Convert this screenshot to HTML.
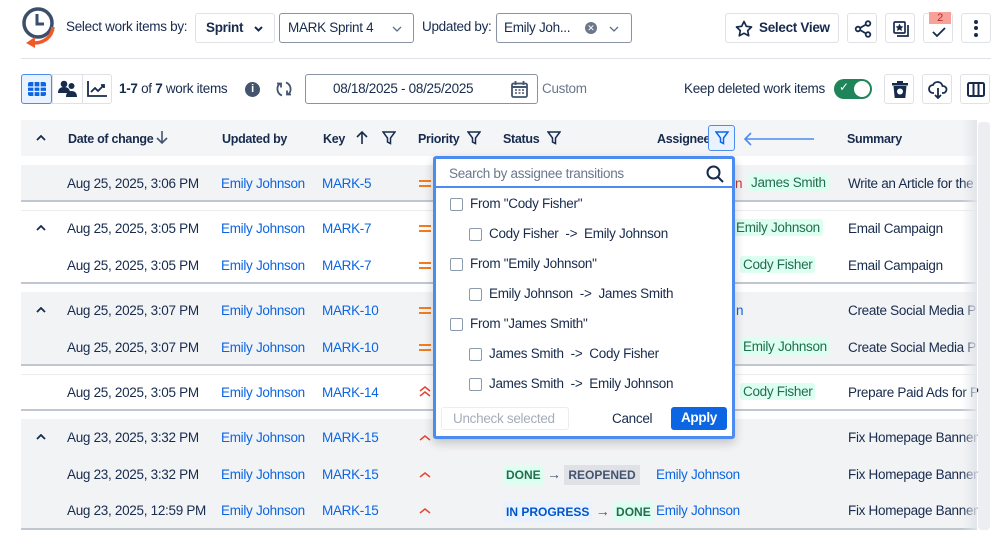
<!DOCTYPE html>
<html><head><meta charset="utf-8"><style>
*{box-sizing:border-box;margin:0;padding:0}
body{width:999px;height:533px;overflow:hidden;background:#fff;font-family:"Liberation Sans",sans-serif;font-size:13.5px;letter-spacing:-0.3px;color:#172b4d;position:relative}
.a{position:absolute;white-space:nowrap}
.btn{position:absolute;border:1px solid #dfe1e6;border-radius:3px;background:#fff}
.sel{position:absolute;border:1px solid #8993a4;border-radius:3px;background:#fff}
.g{position:absolute;left:21px;width:956px;border-bottom:2px solid #c1c7d0}
.gray{background:#f2f3f5}
.white{background:#fff;border-top:1px solid #ebecf0}
.lnk{color:#0c66e4}
.h{font-weight:bold;font-size:12.5px;color:#172b4d}
.tag{position:absolute;background:#dcfff1;color:#216e4e;padding:1px 3px;border-radius:3px}
.cb{position:absolute;width:13px;height:13px;border:1.5px solid #8c9bab;border-radius:2px;background:#fff}
.eq{position:absolute;width:12px;height:7px;border-top:2px solid #f07d22;border-bottom:2px solid #f07d22}
.chev{position:absolute}
</style></head><body>
<svg class="a" style="left:20px;top:5px" width="40" height="46" viewBox="0 0 40 46"><circle cx="18" cy="18" r="14" fill="none" stroke="#3d4e6b" stroke-width="3.5"/><path d="M17 9v10h7" fill="none" stroke="#3d4e6b" stroke-width="3"/><path d="M33 22c-1 10-9 16-19 16" fill="none" stroke="#f05a28" stroke-width="3.5"/><path d="M15 32l-9 6 9 5z" fill="#f05a28"/></svg>
<div class="a" style="left:66px;top:19px">Select work items by:</div>
<div class="btn" style="left:195px;top:13px;width:80px;height:30px"><span class="a" style="left:10px;top:6px;font-weight:bold">Sprint</span><svg class="a" style="left:58px;top:12px" width="9" height="6" viewBox="0 0 9 6"><path d="M1 1l3.5 3.5L8 1" fill="none" stroke="#172b4d" stroke-width="2"/></svg></div>
<div class="sel" style="left:279px;top:13px;width:135px;height:30px"><span class="a" style="left:8px;top:6px">MARK Sprint 4</span><svg class="a" style="left:112px;top:12px" width="10" height="6" viewBox="0 0 10 6"><path d="M1 1l4 4 4-4" fill="none" stroke="#5e6c84" stroke-width="1.3"/></svg></div>
<div class="a" style="left:422px;top:19px">Updated by:</div>
<div class="sel" style="left:496px;top:13px;width:136px;height:30px"><span class="a" style="left:7px;top:6px">Emily Joh...</span><span class="a" style="left:88px;top:8px;width:12px;height:12px;border-radius:6px;background:#6b778c;color:#fff;font-size:9px;line-height:12px;text-align:center;letter-spacing:0">✕</span><svg class="a" style="left:112px;top:12px" width="10" height="6" viewBox="0 0 10 6"><path d="M1 1l4 4 4-4" fill="none" stroke="#5e6c84" stroke-width="1.3"/></svg></div>
<div class="btn" style="left:725px;top:13px;width:114px;height:30px"><svg class="a" style="left:9px;top:6px" width="18" height="17" viewBox="0 0 18 17"><path d="M9 1.5l2.3 4.8 5.2.7-3.8 3.6 1 5.2L9 13.3l-4.7 2.5 1-5.2L1.5 7l5.2-.7z" fill="none" stroke="#172b4d" stroke-width="1.7" stroke-linejoin="round"/></svg><span class="a" style="left:33px;top:6px;font-weight:bold">Select View</span></div>
<div class="btn" style="left:847px;top:13px;width:30px;height:30px"><svg class="a" style="left:6px;top:6px" width="18" height="18" viewBox="0 0 18 18" fill="none" stroke="#172b4d" stroke-width="1.8"><circle cx="4" cy="9" r="2.3"/><circle cx="14" cy="3.5" r="2.3"/><circle cx="14" cy="14.5" r="2.3"/><path d="M6 8l6-3.5M6 10l6 3.5"/></svg></div>
<div class="btn" style="left:885px;top:13px;width:30px;height:30px"><svg class="a" style="left:6px;top:6px" width="18" height="18" viewBox="0 0 18 18" fill="none" stroke="#172b4d" stroke-width="1.7"><rect x="2" y="2" width="11" height="11" rx="1"/><path d="M5 16h11V5"/><path d="M7.5 4.5l1 2 2 .3-1.5 1.4.4 2-1.9-1-1.9 1 .4-2-1.5-1.4 2-.3z" fill="#172b4d" stroke-width=".8"/></svg></div>
<div class="btn" style="left:923px;top:13px;width:30px;height:30px"><div class="a" style="left:5px;top:-2px;width:22px;height:12px;background:#f8a09a;color:#ae2e24;font-size:11px;text-align:center;line-height:12px">2</div><svg class="a" style="left:7px;top:12px" width="16" height="12" viewBox="0 0 16 12"><path d="M2 6l4 4 8-8" fill="none" stroke="#172b4d" stroke-width="1.8"/></svg></div>
<div class="btn" style="left:961px;top:13px;width:30px;height:30px"><span class="a" style="left:12px;top:6px;width:4px;height:4px;border-radius:2px;background:#172b4d"></span><span class="a" style="left:12px;top:12px;width:4px;height:4px;border-radius:2px;background:#172b4d"></span><span class="a" style="left:12px;top:19px;width:4px;height:4px;border-radius:2px;background:#172b4d"></span></div>
<div class="a" style="left:21px;top:58px;width:970px;height:1px;background:#dfe1e6"></div>
<div class="btn" style="left:21px;top:74px;width:91px;height:30px"></div>
<div class="a" style="left:21px;top:74px;width:31px;height:30px;border:1px solid #4c8cf0;background:#e9f2ff;border-radius:3px"><svg class="a" style="left:6px;top:7px" width="18" height="14" viewBox="0 0 18 14"><rect x="0" y="0" width="18" height="14" rx="2" fill="#0c66e4"/><path d="M0 5h18M0 9.5h18M6 0v14M12 0v14" stroke="#e9f2ff" stroke-width="1.3"/></svg></div>
<div class="a" style="left:52px;top:74px;width:1px;height:30px;background:#dfe1e6"></div>
<div class="a" style="left:82px;top:74px;width:1px;height:30px;background:#dfe1e6"></div>
<svg class="a" style="left:58px;top:80px" width="19" height="17" viewBox="0 0 19 17" fill="#172b4d"><circle cx="6" cy="4" r="3.3"/><circle cx="13.5" cy="6" r="3"/><path d="M0 13c0-4 2-6 6-6s6 2 6 6zM8 17c0-4 2-6 5.5-6s5.5 2 5.5 6z"/></svg>
<svg class="a" style="left:87px;top:81px" width="20" height="16" viewBox="0 0 20 16" fill="none" stroke="#172b4d" stroke-width="1.8"><path d="M1 0v15h19"/><path d="M4 11l4-4 3 3 6-6M14 4h3v3"/></svg>
<div class="a" style="left:119px;top:81px"><b>1-7</b> of <b>7</b> work items</div>
<div class="a" style="left:245px;top:82px;width:15px;height:15px;border-radius:8px;background:#44546f;color:#fff;font-size:11px;font-weight:bold;text-align:center;line-height:15px">i</div>
<svg class="a" style="left:275px;top:80px" width="18" height="18" viewBox="0 0 18 18" fill="none" stroke="#44546f" stroke-width="1.8"><path d="M5 3.5A7 7 0 0 0 7 15.5M13 14.5A7 7 0 0 0 11 2.5"/><path d="M2 3.5h4v4M16 14.5h-4v-4"/></svg>
<div class="sel" style="left:305px;top:74px;width:233px;height:30px"><span class="a" style="left:27px;top:6px;color:#172b4d">08/18/2025 - 08/25/2025</span><svg class="a" style="left:205px;top:6px" width="17" height="17" viewBox="0 0 17 17"><rect x="1" y="2.5" width="15" height="13.5" rx="1.5" fill="none" stroke="#44546f" stroke-width="1.8"/><path d="M1 6h15" stroke="#44546f" stroke-width="2"/><path d="M4.5 0v4M12.5 0v4" stroke="#44546f" stroke-width="1.8"/><path d="M4 9h2M7.5 9h2M11 9h2M4 12h2M7.5 12h2M11 12h2" stroke="#44546f" stroke-width="1.5"/></svg></div>
<div class="a" style="left:542px;top:81px;color:#6b778c">Custom</div>
<div class="a" style="left:684px;top:81px">Keep deleted work items</div>
<div class="a" style="left:834px;top:79px;width:38px;height:20px;border-radius:10px;background:#1f845a"><span class="a" style="left:5px;top:1px;color:#fff;font-size:12px">✓</span><span class="a" style="left:20px;top:2px;width:16px;height:16px;border-radius:8px;background:#fff"></span></div>
<div class="btn" style="left:884px;top:74px;width:30px;height:30px"><svg class="a" style="left:7px;top:6px" width="16" height="17" viewBox="0 0 16 17" fill="#172b4d"><rect x="0" y="2" width="16" height="2.5"/><rect x="5" y="0" width="6" height="2"/><path d="M1.5 5h13l-1.2 12H2.7z"/><circle cx="8" cy="10.5" r="3" fill="#fff"/></svg></div>
<div class="btn" style="left:922px;top:74px;width:30px;height:30px"><svg class="a" style="left:5px;top:6px" width="20" height="18" viewBox="0 0 20 18" fill="none" stroke="#172b4d" stroke-width="1.8"><path d="M6 12H5a4 4 0 0 1 0-8 5 5 0 0 1 9.5 1H15a3.5 3.5 0 0 1 0 7h-1"/><path d="M10 7v10M7 14l3 3 3-3"/></svg></div>
<div class="btn" style="left:960px;top:74px;width:30px;height:30px"><svg class="a" style="left:6px;top:7px" width="18" height="15" viewBox="0 0 18 15" fill="none" stroke="#172b4d" stroke-width="2"><rect x="1" y="1" width="16" height="13" rx="1.5"/><path d="M6.5 1v13M11.5 1v13"/></svg></div>
<!-- header -->
<div class="a" style="left:21px;top:120px;width:956px;height:36px;background:#f4f5f7"></div>
<div class="a" style="left:978px;top:122px;width:12px;height:408px;background:#eceef1;border-radius:4px"></div>
<svg class="a" style="left:36px;top:135px" width="10" height="6" viewBox="0 0 10 6"><path d="M1 5l4-4 4 4" fill="none" stroke="#172b4d" stroke-width="1.8"/></svg>
<div class="a h" style="left:68px;top:132px">Date of change</div>
<svg class="a" style="left:156px;top:130px" width="12" height="15" viewBox="0 0 12 15"><path d="M6 1v12M1 8l5 5 5-5" fill="none" stroke="#44546f" stroke-width="1.6"/></svg>
<div class="a h" style="left:222px;top:132px">Updated by</div>
<div class="a h" style="left:323px;top:132px">Key</div>
<svg class="a" style="left:356px;top:130px" width="12" height="15" viewBox="0 0 12 15"><path d="M6 14V2M1 7l5-5 5 5" fill="none" stroke="#172b4d" stroke-width="1.6"/></svg>
<svg class="a" style="left:382px;top:131px" width="14" height="14" viewBox="0 0 14 14"><path d="M1 1h12L8.5 7v5.5l-3-1.5V7z" fill="none" stroke="#172b4d" stroke-width="1.5"/></svg>
<div class="a h" style="left:418px;top:132px">Priority</div>
<svg class="a" style="left:467px;top:131px" width="14" height="14" viewBox="0 0 14 14"><path d="M1 1h12L8.5 7v5.5l-3-1.5V7z" fill="none" stroke="#172b4d" stroke-width="1.5"/></svg>
<div class="a h" style="left:503px;top:132px">Status</div>
<svg class="a" style="left:547px;top:131px" width="14" height="14" viewBox="0 0 14 14"><path d="M1 1h12L8.5 7v5.5l-3-1.5V7z" fill="none" stroke="#172b4d" stroke-width="1.5"/></svg>
<div class="a h" style="left:657px;top:132px">Assignee</div>
<div class="a" style="left:708px;top:125px;width:27px;height:26px;border:1px solid #4c8cf0;border-radius:3px;background:#e9f2ff"><svg class="a" style="left:6px;top:5px" width="14" height="14" viewBox="0 0 14 14"><path d="M1 1h12L8.5 7v5.5l-3-1.5V7z" fill="none" stroke="#0c66e4" stroke-width="1.5"/></svg></div>
<svg class="a" style="left:743px;top:132px" width="72" height="14" viewBox="0 0 72 14"><path d="M71 7H2M8 1L2 7l6 6" fill="none" stroke="#4c8cf0" stroke-width="1.6"/></svg>
<div class="a h" style="left:847px;top:132px">Summary</div>
<!-- groups -->
<div class="g gray" style="top:165px;height:37px"></div>
<div class="g white" style="top:210px;height:74px"></div>
<div class="g gray" style="top:292px;height:74px"></div>
<div class="g white" style="top:374px;height:37px"></div>
<div class="g gray" style="top:419px;height:111px"></div>
<svg class="a" style="left:36px;top:225px" width="10" height="6" viewBox="0 0 10 6"><path d="M1 5l4-4 4 4" fill="none" stroke="#172b4d" stroke-width="1.8"/></svg>
<svg class="a" style="left:36px;top:307px" width="10" height="6" viewBox="0 0 10 6"><path d="M1 5l4-4 4 4" fill="none" stroke="#172b4d" stroke-width="1.8"/></svg>
<svg class="a" style="left:36px;top:434px" width="10" height="6" viewBox="0 0 10 6"><path d="M1 5l4-4 4 4" fill="none" stroke="#172b4d" stroke-width="1.8"/></svg>
<div class="a" style="left:67px;top:176px">Aug 25, 2025, 3:06 PM</div>
<div class="a" style="left:67px;top:221px">Aug 25, 2025, 3:05 PM</div>
<div class="a" style="left:67px;top:258px">Aug 25, 2025, 3:05 PM</div>
<div class="a" style="left:67px;top:303px">Aug 25, 2025, 3:07 PM</div>
<div class="a" style="left:67px;top:340px">Aug 25, 2025, 3:07 PM</div>
<div class="a" style="left:67px;top:385px">Aug 25, 2025, 3:05 PM</div>
<div class="a" style="left:67px;top:430px">Aug 23, 2025, 3:32 PM</div>
<div class="a" style="left:67px;top:467px">Aug 23, 2025, 3:32 PM</div>
<div class="a" style="left:67px;top:503px">Aug 23, 2025, 12:59 PM</div>
<div class="a lnk" style="left:221px;top:176px">Emily Johnson</div><div class="a lnk" style="left:322px;top:176px">MARK-5</div>
<div class="a lnk" style="left:221px;top:221px">Emily Johnson</div><div class="a lnk" style="left:322px;top:221px">MARK-7</div>
<div class="a lnk" style="left:221px;top:258px">Emily Johnson</div><div class="a lnk" style="left:322px;top:258px">MARK-7</div>
<div class="a lnk" style="left:221px;top:303px">Emily Johnson</div><div class="a lnk" style="left:322px;top:303px">MARK-10</div>
<div class="a lnk" style="left:221px;top:340px">Emily Johnson</div><div class="a lnk" style="left:322px;top:340px">MARK-10</div>
<div class="a lnk" style="left:221px;top:385px">Emily Johnson</div><div class="a lnk" style="left:322px;top:385px">MARK-14</div>
<div class="a lnk" style="left:221px;top:430px">Emily Johnson</div><div class="a lnk" style="left:322px;top:430px">MARK-15</div>
<div class="a lnk" style="left:221px;top:467px">Emily Johnson</div><div class="a lnk" style="left:322px;top:467px">MARK-15</div>
<div class="a lnk" style="left:221px;top:503px">Emily Johnson</div><div class="a lnk" style="left:322px;top:503px">MARK-15</div>
<div class="eq" style="left:419px;top:180px"></div>
<div class="eq" style="left:419px;top:225px"></div>
<div class="eq" style="left:419px;top:262px"></div>
<div class="eq" style="left:419px;top:307px"></div>
<div class="eq" style="left:419px;top:344px"></div>
<svg class="a" style="left:419px;top:386px" width="12" height="11" viewBox="0 0 12 11"><path d="M1 5l5-4 5 4M1 10l5-4 5 4" fill="none" stroke="#e34935" stroke-width="1.5"/></svg>
<svg class="a" style="left:419px;top:434px" width="12" height="7" viewBox="0 0 12 7"><path d="M1 6l5-4 5 4" fill="none" stroke="#e34935" stroke-width="1.5"/></svg>
<svg class="a" style="left:419px;top:471px" width="12" height="7" viewBox="0 0 12 7"><path d="M1 6l5-4 5 4" fill="none" stroke="#e34935" stroke-width="1.5"/></svg>
<svg class="a" style="left:419px;top:507px" width="12" height="7" viewBox="0 0 12 7"><path d="M1 6l5-4 5 4" fill="none" stroke="#e34935" stroke-width="1.5"/></svg>
<div class="a" style="left:503px;top:466px;font-size:12px;font-weight:bold;letter-spacing:0"><span style="background:#dcfff1;color:#216e4e;padding:3px 3px">DONE</span> <span style="color:#44546f;font-size:14px">→</span> <span style="background:#dfe1e6;color:#44546f;padding:3px 4px">REOPENED</span></div>
<div class="a" style="left:503px;top:503px;font-size:12px;font-weight:bold;letter-spacing:0"><span style="background:#e9f2ff;color:#0055cc;padding:3px 3px">IN PROGRESS</span> <span style="color:#44546f;font-size:14px">→</span> <span style="background:#dcfff1;color:#216e4e;padding:3px 3px">DONE</span></div>
<div class="a lnk" style="left:656px;top:467px">Emily Johnson</div>
<div class="a lnk" style="left:656px;top:503px">Emily Johnson</div>
<div class="a" style="left:735px;top:176px;color:#c9372c">n</div>
<div class="tag" style="left:748px;top:174px">James Smith</div>
<div class="tag" style="left:733px;top:219px">Emily Johnson</div>
<div class="tag" style="left:740px;top:256px">Cody Fisher</div>
<div class="a lnk" style="left:736px;top:303px">n</div>
<div class="tag" style="left:740px;top:338px">Emily Johnson</div>
<div class="tag" style="left:740px;top:383px">Cody Fisher</div>
<div class="a" style="left:848px;top:176px">Write an Article for the</div>
<div class="a" style="left:848px;top:221px">Email Campaign</div>
<div class="a" style="left:848px;top:258px">Email Campaign</div>
<div class="a" style="left:848px;top:303px">Create Social Media P</div>
<div class="a" style="left:848px;top:340px">Create Social Media P</div>
<div class="a" style="left:848px;top:385px">Prepare Paid Ads for P</div>
<div class="a" style="left:848px;top:430px">Fix Homepage Banner</div>
<div class="a" style="left:848px;top:467px">Fix Homepage Banner</div>
<div class="a" style="left:848px;top:503px">Fix Homepage Banner</div>
<div class="a" style="left:962px;top:120px;width:15px;height:410px;background:linear-gradient(to right,rgba(255,255,255,0),rgba(225,228,232,.9))"></div>
<!-- popup -->
<div class="a" style="left:433px;top:156px;width:302px;height:283px;background:#fff;border:3px solid #4c8cf0;border-radius:3px;box-shadow:0 4px 10px rgba(0,0,0,.2)">
<div class="a" style="left:0;top:0;width:296px;height:29px;border-bottom:2px solid #4c8cf0"></div>
<div class="a" style="left:13px;top:7px;color:#6b778c">Search by assignee transitions</div>
<svg class="a" style="left:270px;top:6px" width="18" height="18" viewBox="0 0 18 18" fill="none" stroke="#172b4d" stroke-width="2"><circle cx="7.5" cy="7.5" r="6"/><path d="M12 12l5 5"/></svg>
<div class="cb" style="left:14px;top:39px"></div><div class="a" style="left:34px;top:37px">From "Cody Fisher"</div>
<div class="cb" style="left:33px;top:69px"></div><div class="a" style="left:53px;top:67px">Cody Fisher&nbsp; -&gt;&nbsp; Emily Johnson</div>
<div class="cb" style="left:14px;top:99px"></div><div class="a" style="left:34px;top:97px">From "Emily Johnson"</div>
<div class="cb" style="left:33px;top:129px"></div><div class="a" style="left:53px;top:127px">Emily Johnson&nbsp; -&gt;&nbsp; James Smith</div>
<div class="cb" style="left:14px;top:159px"></div><div class="a" style="left:34px;top:157px">From "James Smith"</div>
<div class="cb" style="left:33px;top:189px"></div><div class="a" style="left:53px;top:187px">James Smith&nbsp; -&gt;&nbsp; Cody Fisher</div>
<div class="cb" style="left:33px;top:219px"></div><div class="a" style="left:53px;top:217px">James Smith&nbsp; -&gt;&nbsp; Emily Johnson</div>
<div class="a" style="left:5px;top:248px;width:128px;height:23px;border:1px solid #ebecf0;border-radius:3px;color:#a5adba;padding:3px 0 0 11px">Uncheck selected</div>
<div class="a" style="left:176px;top:252px">Cancel</div>
<div class="a" style="left:235px;top:248px;width:56px;height:23px;background:#0c66e4;border-radius:3px;color:#fff;font-weight:bold;text-align:center;padding-top:3px">Apply</div>
</div>
</body></html>
